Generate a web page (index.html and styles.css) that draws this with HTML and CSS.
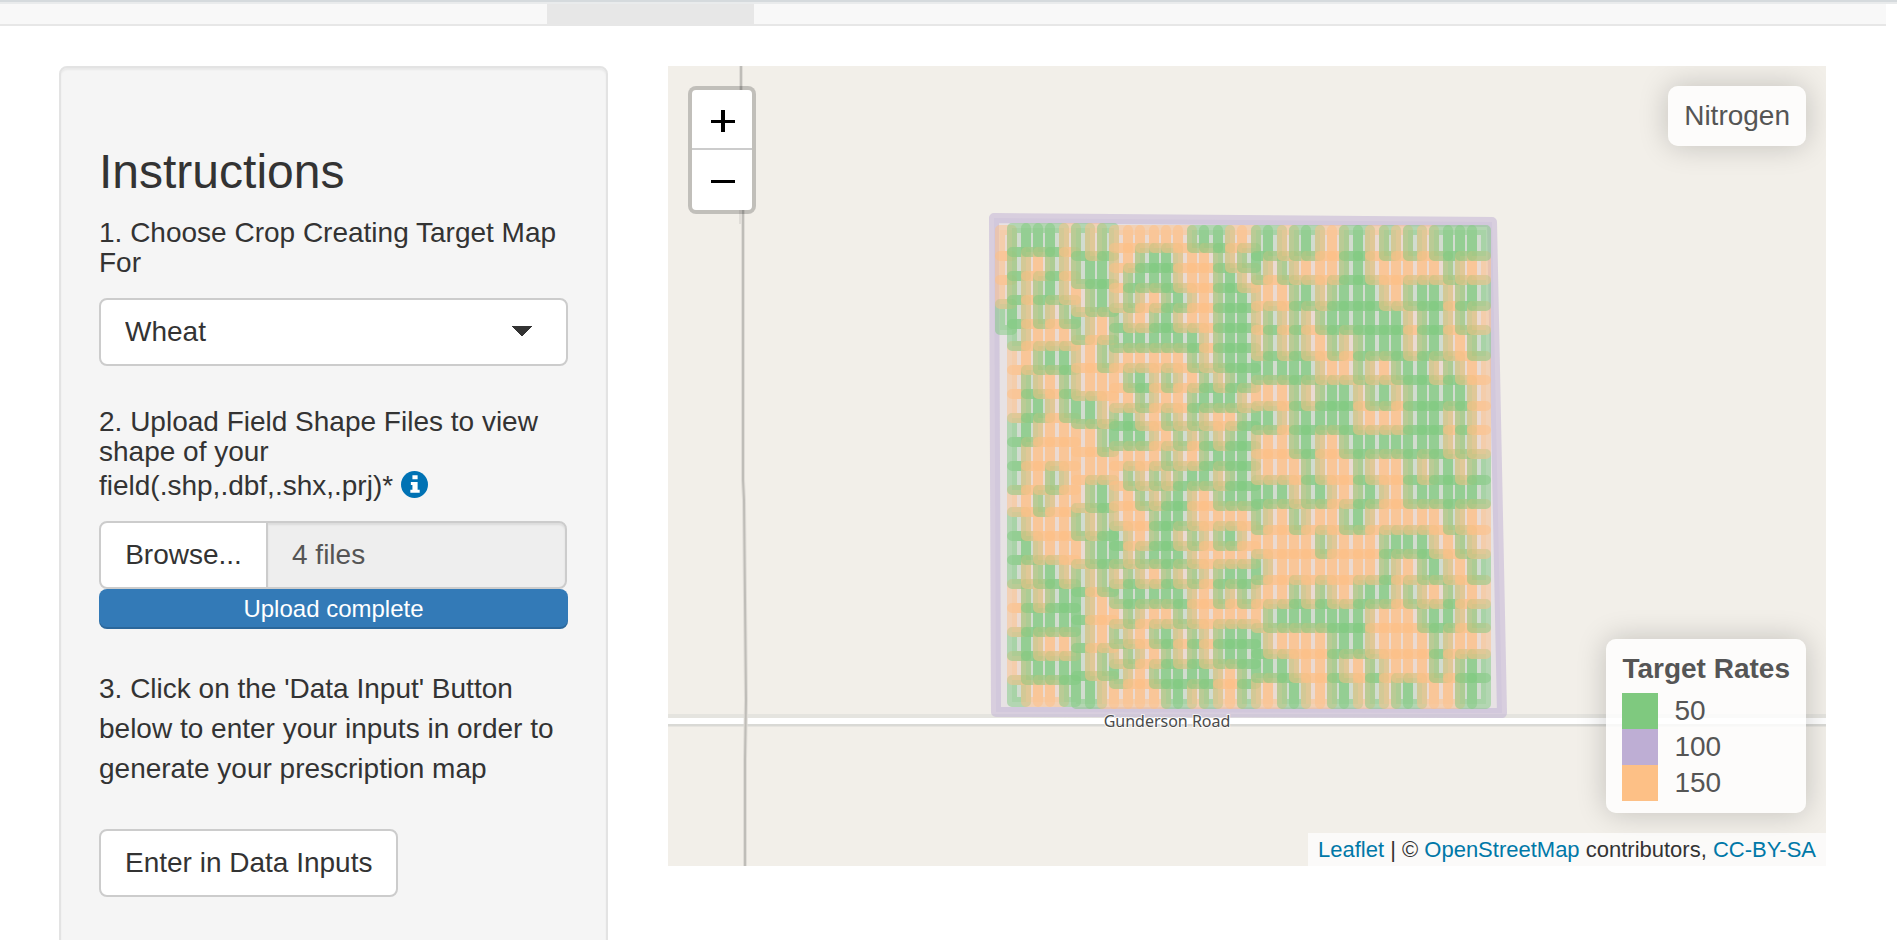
FILE: index.html
```html
<!DOCTYPE html>
<html lang="en">
<head>
<meta charset="utf-8">
<title>Target Map</title>
<link rel="stylesheet" href="styles.css">
</head>
<body>
<div class="topline"></div>
<nav class="navbar" aria-label="Main"><span class="navbar-gap"></span><span class="navbar-active"></span></nav>
<main class="page">
  <aside class="sidebar">
    <h1 class="title">Instructions</h1>
    <label class="step" for="crop">1. Choose Crop Creating Target Map For</label>
    <select class="control crop-select" id="crop"><option>Wheat</option></select>
    <label class="step step-upload" for="browse">2. Upload Field Shape Files to view shape of your field(.shp,.dbf,.shx,.prj)*
      <svg class="info" viewBox="0 0 26 26" aria-hidden="true"><circle cx="13" cy="13" r="13" fill="#0072b4"/><path d="M11 4h5v4h-5zM9.500 10.500H16V18h2v3H9v-3h2v-4.500H9.500z" fill="#fff"/></svg>
    </label>
    <div class="upload">
      <button class="control browse" id="browse" type="button">Browse...</button>
      <input class="control file-name" type="text" value="4 files" readonly aria-label="Selected files">
    </div>
    <div class="progress" role="status">Upload complete</div>
    <p class="note">3. Click on the 'Data Input' Button below to enter your inputs in order to generate your prescription map</p>
    <button class="control data-button" type="button">Enter in Data Inputs</button>
  </aside>
  <section class="map" aria-label="Target map">
    <svg class="canvas" width="1158" height="800" viewBox="668 66 1158 800" aria-hidden="true">
      <path d="M668 716H1826" class="road-shade"/>
      <path d="M668 725H1826" class="road-edge"/>
      <path d="M668 721H1826" class="road"/>
      <path d="M741 66V224M743 205V480L744 500L746 700L745 760V866" class="track-edge"/>
      <path d="M741 66V205M743 205V480L744 500L746 700L745 760V866" class="track"/>
      <g id="field"></g>
      <text x="1167" y="727" class="road-name">Gunderson Road</text>
    </svg>
    <div class="zoom-control">
      <button type="button" aria-label="Zoom in"><svg width="26" height="24" viewBox="0 0 26 24"><path d="M2 13.500H26" stroke="#000" stroke-width="3"/><path d="M14 2V24" stroke="#000" stroke-width="4"/></svg></button>
      <button type="button" aria-label="Zoom out"><svg width="26" height="24" viewBox="0 0 26 24"><path d="M2 13.500H26" stroke="#000" stroke-width="3"/></svg></button>
    </div>
    <div class="panel nutrient">Nitrogen</div>
    <div class="panel legend">
      <strong>Target Rates</strong>
      <ul>
        <li><i class="swatch low"></i>50</li>
        <li><i class="swatch mid"></i>100</li>
        <li><i class="swatch high"></i>150</li>
      </ul>
    </div>
    <div class="attribution"><a href="#leaflet">Leaflet</a> | © <a href="#osm">OpenStreetMap</a> contributors, <a href="#license">CC-BY-SA</a></div>
  </section>
</main>
<script src="field.js"></script>
</body>
</html>
```
FILE: styles.css
```css
* { box-sizing: border-box; }
html { overflow: hidden; }
body {
  margin: 0;
  background: #fff;
  color: #333;
  font-family: "Liberation Sans", Arial, sans-serif;
  font-size: 28px;
  line-height: 40px;
}
.topline {
  height: 4px;
  border-top: 2px solid #d5dadd;
  background: #e9ebec;
}
.navbar {
  display: flex;
  height: 22px;
  margin-right: 11px;
  border-bottom: 2px solid #e7e7e7;
  background: #f8f8f8;
}
.navbar-gap { width: 29%; }
.navbar-active { width: 11%; background: #e7e7e7; }
.page {
  display: grid;
  grid-template-columns: minmax(0, 1fr) minmax(0, 2fr);
  align-items: start;
  margin: 40px 41px 0 29px;
}
.sidebar {
  margin: 0 30px;
  padding: 77px 38px;
  border: 2px solid #e3e3e3;
  border-radius: 8px;
  background: #f5f5f5;
  box-shadow: inset 0 2px 2px rgba(0, 0, 0, .05);
}
.title { margin: 0 0 20px; font-size: 48px; font-weight: 400; line-height: 53px; }
.step { display: block; margin-bottom: 20px; line-height: 30px; }
.step-upload { margin: 41px 0 20px; }
.info { width: 27px; height: 27px; margin-top: 4px; vertical-align: -3px; }
.control {
  height: 68px;
  border: 2px solid #ccc;
  border-radius: 8px;
  background: #fff;
  color: #333;
  font: inherit;
}
.crop-select {
  display: block;
  width: 100%;
  padding: 0 24px;
  appearance: none;
  background: #fff conic-gradient(from -45deg at 50% 100%, #333 90deg, transparent 0) no-repeat right 34px top 26px / 20px 10px;
}
.upload { display: flex; margin-right: 1px; }
.browse { flex: none; width: 169px; border-radius: 8px 0 0 8px; }
.file-name {
  flex: 1;
  min-width: 0;
  margin-left: -2px;
  padding: 0 24px;
  border-radius: 0 8px 8px 0;
  background: #eee;
  color: #555;
  box-shadow: inset 0 2px 2px rgba(0, 0, 0, .075);
}
.progress {
  height: 40px;
  border-radius: 8px;
  background: #337ab7;
  box-shadow: inset 0 -2px 0 rgba(0, 0, 0, .15);
  color: #fff;
  font-size: 24px;
  text-align: center;
}
.note { margin: 40px 0; }
.data-button { padding: 0 24px; }
.map {
  position: relative;
  height: 800px;
  margin: 0 30px;
  overflow: hidden;
  background: #f2efe9;
}
.canvas { display: block; }
.track-edge { fill: none; stroke: #e0ddd8; stroke-width: 4; }
.track { fill: none; stroke: #bfbdb8; stroke-width: 2; }
.road-shade { stroke: #e5e4df; stroke-width: 4; }
.road-edge { stroke: #d9d9d5; stroke-width: 3; }
.road { stroke: #fff; stroke-width: 6; }
.road-name {
  font: 16px "Noto Sans", sans-serif;
  text-anchor: middle;
  fill: #4a4a4a;
  stroke: #fff;
  stroke-width: 2;
  stroke-opacity: .7;
  paint-order: stroke;
}
.zone { stroke-width: 10; stroke-opacity: .5; fill-opacity: .2; stroke-linejoin: round; }
.low { fill: #7fc97f; stroke: #7fc97f; background: #7fc97f; }
.mid { fill: #beaed4; stroke: #beaed4; background: #beaed4; }
.high { fill: #fdc086; stroke: #fdc086; background: #fdc086; }
.zoom-control {
  position: absolute;
  top: 20px;
  left: 20px;
  display: grid;
  border: 4px solid rgba(0, 0, 0, .2);
  border-radius: 8px;
  background: #fff;
  background-clip: padding-box;
}
.zoom-control button {
  display: grid;
  place-items: center;
  width: 60px;
  height: 60px;
  padding: 0;
  border: 0;
  background: none;
}
.zoom-control button:first-child { padding-top: 2px; border-bottom: 2px solid #ccc; }
.panel {
  position: absolute;
  right: 20px;
  border-radius: 10px;
  background: rgba(255, 255, 255, .8);
  box-shadow: 0 0 30px rgba(0, 0, 0, .2);
  color: #555;
}
.nutrient { top: 20px; padding: 10px 16px; }
.legend { bottom: 53px; padding: 10px 16px; }
.legend ul { margin: 0; padding: 4px 0 2px; list-style: none; }
.legend li { display: flex; gap: 16px; line-height: 36px; }
.swatch { width: 36px; height: 36px; }
.attribution {
  position: absolute;
  right: 0;
  bottom: 0;
  padding: 0 10px;
  background: rgba(255, 255, 255, .7);
  font-size: 22px;
  line-height: 33px;
}
.attribution a { color: #0078a8; text-decoration: none; }
```
FILE: field.js
```js
// Column boundaries of the application grid, west to east.
const columns = [1000, 1012, 1026, 1038, 1050, 1064, 1076, 1090, 1102, 1114, 1128, 1140, 1154,
  1166, 1178, 1192, 1204, 1218, 1230, 1242, 1256, 1268, 1282, 1294, 1306, 1320, 1332, 1344,
  1358, 1370, 1384, 1396, 1408, 1422, 1434, 1448, 1460, 1472, 1486];

// Each strip: first column, row boundaries, and rates per row (G = 50, O = 150).
const strips = [
  { first: 0, edges: [230, 256, 280, 304, 330], rows: ["O", "O", "O", "G"] },
  { first: 1,
    edges: [228, 252, 276, 300, 324, 346, 370, 394, 418, 442, 466, 490, 512, 536, 560, 584, 608, 632, 656, 680, 702],
    rows: ["GGGGO", "GOOGO", "GOGGO", "GOGOG", "GOOOO", "OOGGG", "OGOOG", "OGGOG", "GGOOO", "GOOOO",
      "GOOGO", "OOGOO", "GOOOO", "GGOOO", "GOGGO", "OGOGG", "OGGGG", "GGOOO", "OGGGG", "GOOOG"] },
  { first: 6,
    edges: [228, 256, 284, 312, 340, 368, 396, 424, 452, 480, 508, 536, 564, 592, 620, 648, 676, 704],
    rows: ["GOG", "GGG", "OGG", "GOO", "OOG", "OOO", "GGO", "OOG", "OOO", "OGG", "GOG", "OGG",
      "GOG", "GOO", "GOO", "GOG", "GGO"] },
  { first: 9,
    edges: [230, 248, 268, 288, 308, 328, 348, 368, 388, 408, 426, 446, 466, 486, 506, 526, 546, 564, 584, 604, 624, 644, 664, 684, 704],
    rows: ["OOOOOOGGGOO", "OOGGGOOOGOG", "OGGGGOOOGGO", "OGOOGGOOGGG", "GOOGGOOOGGG", "GGGGGGGOGGG",
      "OOOOOOGOGGG", "OGGOGOOGOGG", "OOGOOOGGGGO", "GGOOGOGOOOG", "GGGOOGOGOGG", "OOOOGOOGGGG",
      "OGOGOGGGOGG", "OOGOGGOOGGG", "OOOGGGOOOOO", "GOOGGOGOGGO", "GOGGGGOOOOO", "OGOOGOGOGGG",
      "GGGGGGOOGOG", "OGOOOGOOOOO", "GOOGGOGOGGG", "OGOOGOGOGGG", "GOOGGGGGOOG", "OOOOGGOGOOG"] },
  { first: 20,
    edges: [230, 256, 280, 306, 330, 356, 380, 406, 430, 454, 480, 504, 530, 554, 580, 604, 628, 654, 678, 704],
    rows: ["GGOGGOOGGOGOGOGGGG", "GOGOOOOGGOOOOOOGOO", "OOOGGOGGGGOOGGGOGG", "OGOGOGGGGGGGOGGOGO",
      "OGOGOOGOGGGGOGGOOG", "GGGGGOOOGOOGGGOGOO", "OOOGOGGGOGGOGGGGGO", "GGOGGGGGOOOOGGGOGO",
      "OOOGGOOGGGGGGGGOGO", "OOOOGOOOGOOOGOGGOG", "GGGOGGOOGGOOGGGGGG", "GOOGOOOGGOOOOOOGOO",
      "OOOOOGOOOOGGGGOOGO", "GOOOOOOOOOGOOGGOOG", "OOOGOGOOGGGOGOOGOO", "OGGGGGGGGOOOOGGGOG",
      "GOOOOOGGGOOOOOGOOO", "GGGOOOGOOGOOOOGOGG", "OOGGOOGGOGOGGOOOGG"] }
];

const field = document.getElementById("field");

function addZone(d, rate) {
  const path = document.createElementNS("http://www.w3.org/2000/svg", "path");
  path.setAttribute("d", d);
  path.setAttribute("class", "zone " + rate);
  field.appendChild(path);
}

addZone("M994 218L1492 222L1502 713L996 712Z", "mid");

for (const { first, edges, rows } of strips) {
  for (let c = 0; c < rows[0].length; c++) {
    const left = columns[first + c];
    const right = columns[first + c + 1];
    for (let r = rows.length - 1; r >= 0; r--) {
      addZone(`M${left} ${edges[r]}H${right}V${edges[r + 1]}H${left}Z`, rows[r][c] === "G" ? "low" : "high");
    }
  }
}
```
